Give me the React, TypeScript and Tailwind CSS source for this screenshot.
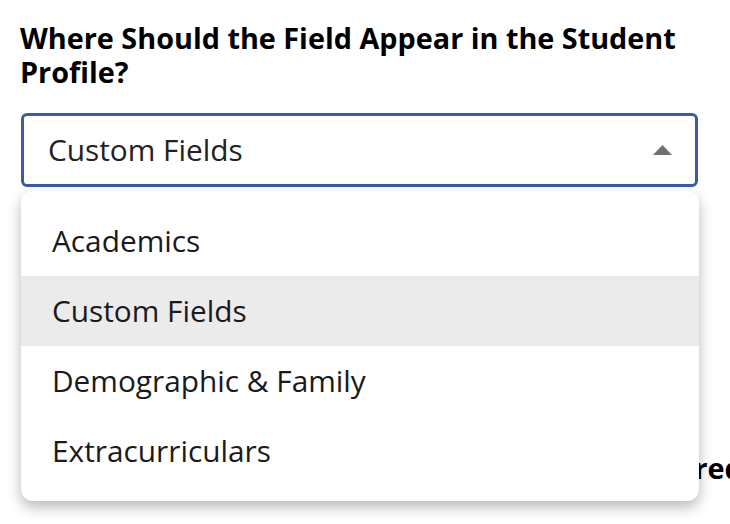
import { useState } from 'react'

const options = ['Academics', 'Custom Fields', 'Demographic & Family', 'Extracurriculars']

export default function App() {
  const [selected, setSelected] = useState('Custom Fields')
  const [open, setOpen] = useState(true)

  return (
    <div
      className="relative min-h-[524px] w-[730px] overflow-hidden bg-white text-[#111]"
      style={{ fontFamily: '"Open Sans", "Noto Sans", sans-serif' }}
    >
      <div className="pl-5 pt-[21px]">
        <h2 className="w-[690px] text-[28.8px] font-bold leading-[34px] text-black">
          Where Should the Field Appear in the Student Profile?
        </h2>

        <div className="relative mt-[24px] w-[678px] pl-px">
          <button
            type="button"
            onClick={() => setOpen(!open)}
            className="flex h-[74px] w-full items-center justify-between rounded-md border-[3px] border-[#3a5ca8] bg-white pl-[24px] pr-[23px] text-left"
          >
            <span className="text-[29.8px] text-[#222]">{selected}</span>
            <svg width="19" height="10" viewBox="0 0 19 10">
              <path d="M9.5 0L19 10H0z" fill="#707070" />
            </svg>
          </button>

          {open && (
            <ul className="absolute left-px right-[-1px] top-[78px] z-10 rounded-xl bg-white py-[15px] shadow-[0_6px_14px_rgba(0,0,0,0.28)]">
              {options.map((opt) => (
                <li key={opt}>
                  <button
                    type="button"
                    onClick={() => {
                      setSelected(opt)
                      setOpen(false)
                    }}
                    className={
                      'flex h-[70px] w-full items-center pl-[31px] text-left text-[29.8px] text-[#1a1a1a] ' +
                      (opt === selected ? 'bg-[#ebebeb]' : 'bg-white')
                    }
                  >
                    {opt}
                  </button>
                </li>
              ))}
            </ul>
          )}
        </div>

        <h3 className="ml-[34px] mt-[264px] whitespace-nowrap text-[28.8px] font-bold leading-[34px] text-black">
          Should This Field Be Marked as Always Required?
        </h3>
      </div>
    </div>
  )
}
